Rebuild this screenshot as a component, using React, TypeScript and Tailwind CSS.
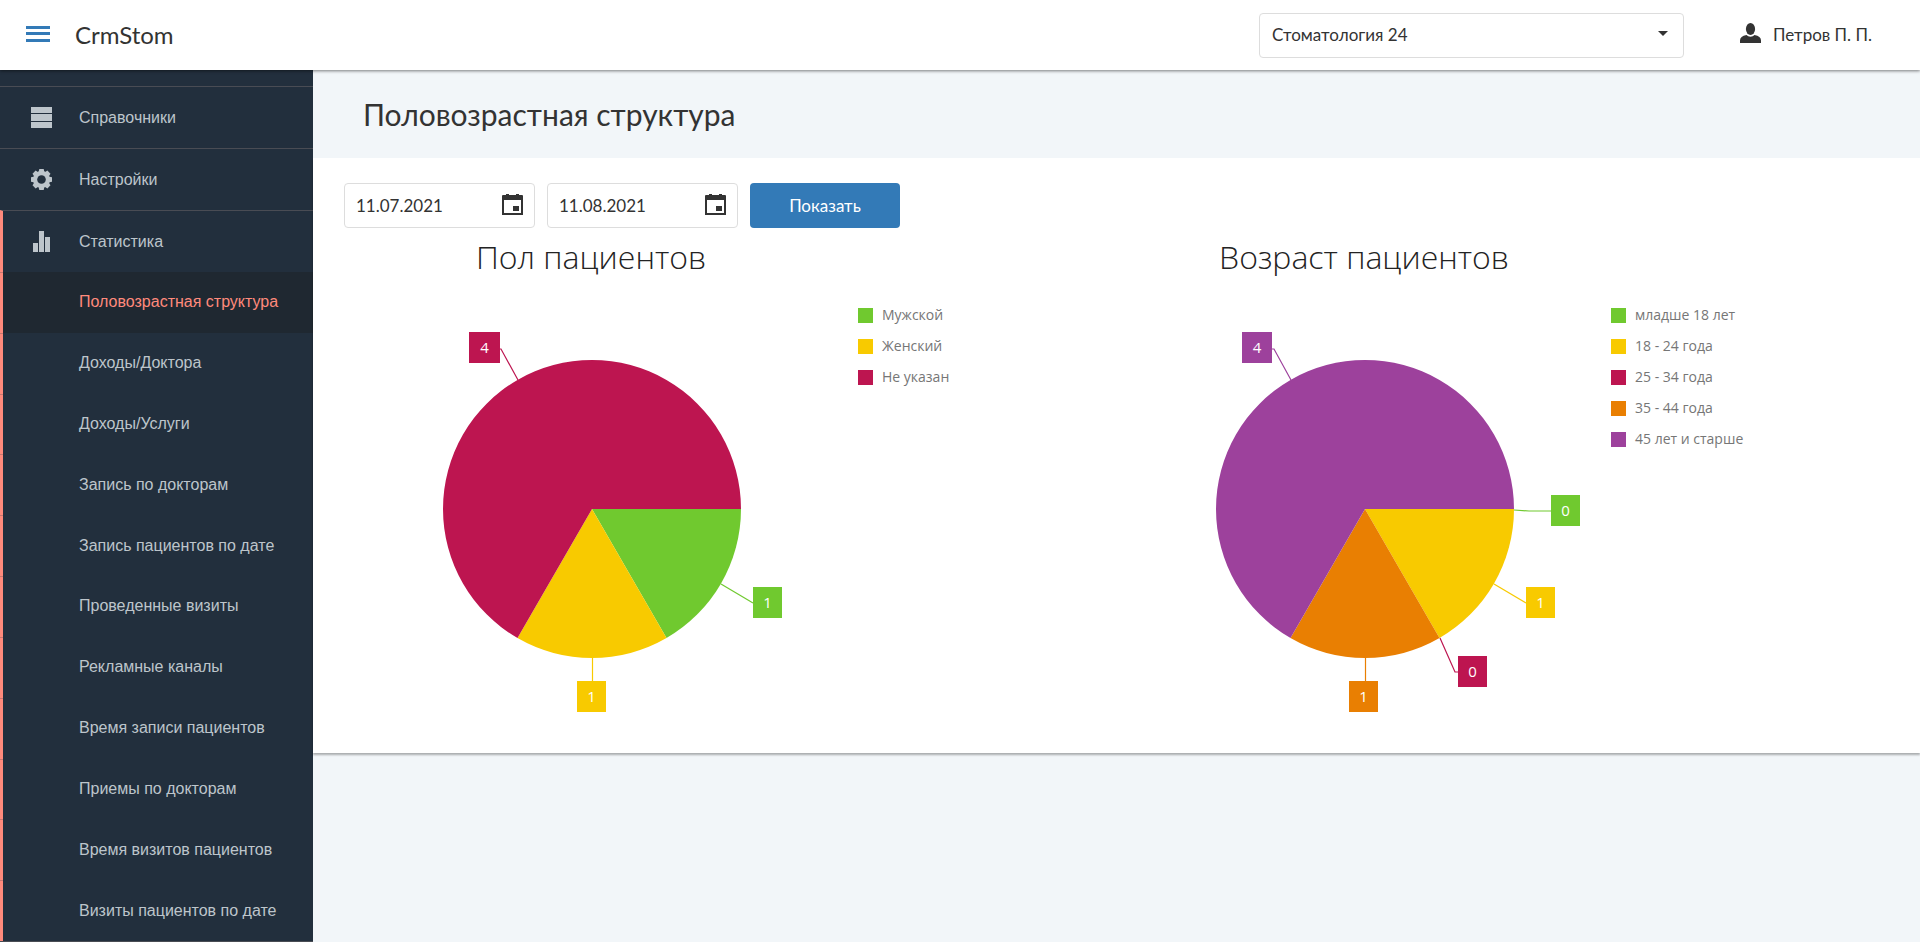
import { FC } from 'react';

type Label = { value: number; color: string; x: number; y: number; width: number; line: string };
type Slice = { color: string; from: number; to: number };
type LegendItem = { title: string; color: string };

const GREEN = '#70c92f';
const YELLOW = '#f8ca00';
const CRIMSON = '#bd1550';
const ORANGE = '#e97f02';
const PURPLE = '#9d419c';

const RADIUS = 149;

const reports = [
  'Половозрастная структура',
  'Доходы/Доктора',
  'Доходы/Услуги',
  'Запись по докторам',
  'Запись пациентов по дате',
  'Проведенные визиты',
  'Рекламные каналы',
  'Время записи пациентов',
  'Приемы по докторам',
  'Время визитов пациентов',
  'Визиты пациентов по дате',
];

const genderSlices: Slice[] = [
  { color: GREEN, from: 0, to: 60 },
  { color: YELLOW, from: 60, to: 120 },
  { color: CRIMSON, from: 120, to: 360 },
];

const genderLabels: Label[] = [
  { value: 4, color: CRIMSON, x: -123, y: -177, width: 31, line: '-92,-160 -91,-160 -74,-129' },
  { value: 1, color: GREEN, x: 161, y: 78, width: 29, line: '129,75 161,94' },
  { value: 1, color: YELLOW, x: -15, y: 172, width: 29, line: '0.5,149 0.5,172' },
];

const genderLegend: LegendItem[] = [
  { title: 'Мужской', color: GREEN },
  { title: 'Женский', color: YELLOW },
  { title: 'Не указан', color: CRIMSON },
];

const ageSlices: Slice[] = [
  { color: YELLOW, from: 0, to: 60 },
  { color: ORANGE, from: 60, to: 120 },
  { color: PURPLE, from: 120, to: 360 },
];

const ageLabels: Label[] = [
  { value: 4, color: PURPLE, x: -123, y: -177, width: 30, line: '-93,-160 -91,-160 -74,-129' },
  { value: 0, color: GREEN, x: 186, y: -14, width: 29, line: '149,1 164,2 186,2' },
  { value: 1, color: YELLOW, x: 161, y: 78, width: 29, line: '129,75 161,94' },
  { value: 0, color: CRIMSON, x: 93, y: 147, width: 29, line: '75,129 90,163 93,163' },
  { value: 1, color: ORANGE, x: -16, y: 172, width: 29, line: '0.5,149 0.5,172' },
];

const ageLegend: LegendItem[] = [
  { title: 'младше 18 лет', color: GREEN },
  { title: '18 - 24 года', color: YELLOW },
  { title: '25 - 34 года', color: CRIMSON },
  { title: '35 - 44 года', color: ORANGE },
  { title: '45 лет и старше', color: PURPLE },
];

const point = (deg: number) => {
  const rad = (deg * Math.PI) / 180;
  return `${RADIUS * Math.cos(rad)} ${RADIUS * Math.sin(rad)}`;
};

const slicePath = ({ from, to }: Slice) =>
  `M0 0 L${point(from)} A${RADIUS} ${RADIUS} 0 ${to - from > 180 ? 1 : 0} 1 ${point(to)} Z`;

const CogIcon: FC = () => (
  <svg width="21" height="21" viewBox="-10.5 -10.5 21 21" fill="#bdc5cb">
    {[0, 45, 90, 135].map((angle) => (
      <path key={angle} d="M-2.2 -10.5 H2.2 L3 -7 V7 L2.2 10.5 H-2.2 L-3 7 V-7 Z" transform={`rotate(${angle})`} />
    ))}
    <circle r="8.4" />
    <circle r="4.3" fill="#222f3d" />
  </svg>
);

const PieChart: FC<{
  title: string;
  slices: Slice[];
  labels: Label[];
  legend: LegendItem[];
  legendClass?: string;
}> = ({ title, slices, labels, legend, legendClass = '' }) => (
  <section className="flex items-start font-['Open_Sans','Noto_Sans',sans-serif]">
    <div className="w-[494px] shrink-0">
      <h2 className="pt-1 text-center text-[32px] font-light leading-[50px] text-[#232323]">{title}</h2>
      <svg className="block" width="494" height="430" viewBox="-248 -227 494 430" overflow="visible">
        {slices.map((slice) => (
          <path key={slice.color} d={slicePath(slice)} fill={slice.color} />
        ))}
        {labels.map((label) => (
          <g key={label.color}>
            <polyline points={label.line} fill="none" stroke={label.color} strokeWidth="1.2" />
            <rect x={label.x} y={label.y} width={label.width} height="31" fill={label.color} />
            <text x={label.x + label.width / 2} y={label.y + 21} textAnchor="middle" fontSize="15" fill="#fff">
              {label.value}
            </text>
          </g>
        ))}
      </svg>
    </div>
    <ul className={`flex flex-col gap-[11px] pt-[77px] ${legendClass}`}>
      {legend.map((item) => (
        <li key={item.title} className="flex items-center gap-[9px] text-sm leading-5 text-[#767676]">
          <svg width="15" height="15">
            <rect width="15" height="15" fill={item.color} />
          </svg>
          {item.title}
        </li>
      ))}
    </ul>
  </section>
);

const DateField: FC<{ label: string; value: string }> = ({ label, value }) => (
  <div className="flex h-[45px] w-[191px] items-center rounded border border-[#ddd] bg-white pl-[11px] pr-[11px]">
    <input aria-label={label} defaultValue={value} className="w-full min-w-0 text-[17px] text-[#333] outline-none" />
    <button type="button" aria-label="Открыть календарь" className="mb-0.5 shrink-0">
      <svg className="block" width="21" height="21" viewBox="0 0 21 21" fill="#333">
        <path
          fillRule="evenodd"
          d="M0 2 Q0 1 1 1 H4 V0 H7 V1 H14 V0 H17 V1 H20 Q21 1 21 2 V21 H0 Z M2 6 V19 H19 V6 Z"
        />
        <rect x="11" y="12" width="6" height="5" />
      </svg>
    </button>
  </div>
);

const App: FC = () => {
  return (
    <div className="flex min-h-screen flex-col bg-[#f2f6f9] font-[Lato,'Noto_Sans',sans-serif] text-[#333]">
      <header className="z-10 flex h-[70px] items-center bg-white pl-[26px] pr-12 shadow-[0_1px_3px_rgba(0,0,0,0.5)]">
        <button type="button" aria-label="Меню">
          <svg className="mb-0.5 block" width="24" height="16" fill="#337ab7">
            <rect width="24" height="3" />
            <rect y="6" width="24" height="3" />
            <rect y="13" width="24" height="3" />
          </svg>
        </button>
        <a href="#" className="ml-[25px] text-2xl">
          CrmStom
        </a>
        <div className="relative ml-auto">
          <select
            aria-label="Клиника"
            className="h-[45px] w-[425px] appearance-none rounded border border-[#ddd] bg-white px-3 text-[17px]"
          >
            <option>Стоматология 24</option>
          </select>
          <svg className="pointer-events-none absolute right-4 top-[18px]" width="10" height="5" fill="#333">
            <path d="M0 0 H10 L5 5 Z" />
          </svg>
        </div>
        <a href="#" className="ml-14 flex items-center gap-3 text-[17px]">
          <svg className="mb-1" width="21" height="20" viewBox="0 0 21 20" fill="#333">
            <ellipse cx="10.5" cy="6" rx="4.6" ry="6" />
            <path d="M6.500 12 Q8 13.800 10.500 13.800 Q13 13.800 14.500 12 Q21 13.200 21 17.500 V20 H0 V17.500 Q0 13.200 6.500 12 Z" />
          </svg>
          Петров П. П.
        </a>
      </header>

      <div className="flex flex-1">
        <nav className="flex w-[313px] shrink-0 flex-col border-b border-[#494c54] bg-[#222f3d] pt-4 font-['Liberation_Sans',Arial,sans-serif] text-base text-[#bdc5cb]">
          <a href="#" className="flex h-[62px] items-center border-t border-[#494c54] pl-[31px]">
            <svg width="21" height="21" fill="#bdc5cb">
              <rect width="21" height="6" />
              <rect y="7" width="21" height="7" />
              <rect y="15" width="21" height="6" />
            </svg>
            <span className="ml-[27px]">Справочники</span>
          </a>
          <a href="#" className="flex h-[62px] items-center border-t border-[#494c54] pl-[31px]">
            <CogIcon />
            <span className="ml-[27px]">Настройки</span>
          </a>
          <a
            href="#"
            className="flex h-[62px] items-center border-l-[3px] border-t border-l-[#ff8a7c] border-t-[#494c54] pl-[30px]"
          >
            <svg width="17" height="21" fill="#bdc5cb">
              <rect y="12" width="5" height="9" />
              <rect x="6" width="5" height="21" />
              <rect x="12" y="6" width="5" height="15" />
            </svg>
            <span className="ml-[29px]">Статистика</span>
          </a>
          <ul className="grid flex-1 auto-rows-fr">
            {reports.map((report, index) => (
              <li
                key={report}
                className={`flex before:w-[3px] before:border-t before:border-[#c9776f] before:bg-[#ff8a7c] before:content-[''] ${
                  index === 0 ? 'bg-[#1f2831] text-[#ff8a7c]' : ''
                }`}
              >
                <a href="#" className="flex flex-1 items-center pl-[76px]">
                  {report}
                </a>
              </li>
            ))}
          </ul>
        </nav>

        <main className="min-w-0 flex-1">
          <h1 className="flex h-[88px] items-center pl-[50px] text-3xl">Половозрастная структура</h1>
          <div className="bg-white pb-[41px] pl-[31px] pr-[30px] pt-[25px] shadow-[0_2px_2px_rgba(0,0,0,0.3)]">
            <form className="flex gap-3" onSubmit={(e) => e.preventDefault()}>
              <DateField label="Дата начала" value="11.07.2021" />
              <DateField label="Дата окончания" value="11.08.2021" />
              <button type="submit" className="h-[45px] w-[150px] rounded bg-[#337ab7] text-[17px] text-white">
                Показать
              </button>
            </form>
            <div className="grid grid-cols-2">
              <PieChart
                title="Пол пациентов"
                slices={genderSlices}
                labels={genderLabels}
                legend={genderLegend}
                legendClass="pl-5"
              />
              <PieChart title="Возраст пациентов" slices={ageSlices} labels={ageLabels} legend={ageLegend} />
            </div>
          </div>
        </main>
      </div>
    </div>
  );
};

export default App;
